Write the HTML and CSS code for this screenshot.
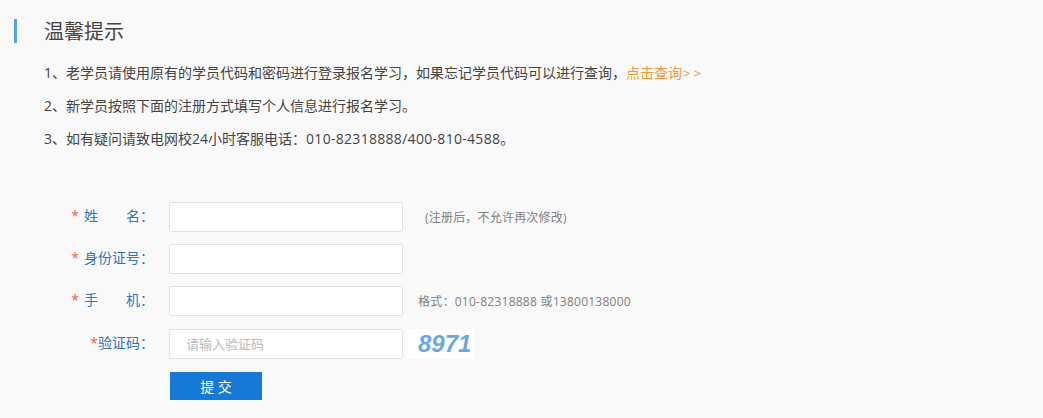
FILE: index.html
```html
<!DOCTYPE html>
<html lang="zh-CN">
<head>
    <meta charset="UTF-8">
    <title>温馨提示</title>
    <link rel="stylesheet" href="styles.css">
</head>
<body>
    <div class="tips">
        <h2 class="tips-title">温馨提示</h2>
        <ul class="tips-list">
            <li>1、老学员请使用原有的学员代码和密码进行登录报名学习，如果忘记学员代码可以进行查询，<a class="query-link" href="#">点击查询<span class="arrows">&gt;&gt;</span></a></li>
            <li>2、新学员按照下面的注册方式填写个人信息进行报名学习。</li>
            <li>3、如有疑问请致电网校24小时客服电话：<span class="tel">010-82318888/400-810-4588</span>。</li>
        </ul>
    </div>

    <form class="reg-form">
        <div class="form-row">
            <label class="form-label"><span class="star">*</span><span class="label-text spread">姓<i>名</i></span>：</label>
            <input class="form-input" type="text">
            <span class="form-hint hint-wide">(注册后，不允许再次修改)</span>
        </div>
        <div class="form-row">
            <label class="form-label"><span class="star">*</span><span class="label-text">身份证号</span>：</label>
            <input class="form-input" type="text">
        </div>
        <div class="form-row">
            <label class="form-label"><span class="star">*</span><span class="label-text spread">手<i>机</i></span>：</label>
            <input class="form-input" type="text">
            <span class="form-hint hint-format">格式：010-82318888 或13800138000</span>
        </div>
        <div class="form-row row-code">
            <label class="form-label"><span class="star tight">*</span>验证码：</label>
            <input class="form-input" type="text" placeholder="请输入验证码">
            <span class="captcha">8971</span>
        </div>
        <button class="submit-btn" type="button">提 交</button>
    </form>
</body>
</html>
```
FILE: styles.css
```css
* {
    box-sizing: border-box;
}
body {
    margin: 0;
    height: 418px;
    overflow: hidden;
    background-color: #f9f9f9;
    color: #444;
    font-family: "Open Sans", "Noto Sans CJK SC", sans-serif;
    font-size: 14px;
}
.tips {
    padding: 19px 0 0 14px;
}
.tips-title {
    margin: 0;
    padding-left: 27px;
    height: 24px;
    line-height: 26px;
    border-left: 3px solid #5ba3e6;
    font-size: 20px;
    font-weight: normal;
    color: #444;
}
.tips-list {
    margin: 14px 0 0;
    padding: 0 0 0 30px;
    list-style: none;
}
.tips-list li {
    height: 33px;
    line-height: 32px;
}
.tel {
    letter-spacing: 0.3px;
}
.query-link {
    color: #ee9a3a;
    text-decoration: none;
}
.arrows {
    letter-spacing: 3px;
    font-size: 13px;
    margin-left: 1px;
}
.reg-form {
    margin-top: 46px;
}
.form-row {
    display: flex;
    align-items: center;
    height: 30px;
    margin-bottom: 12px;
}
.row-code {
    margin-top: 13px;
    margin-bottom: 13px;
}
.form-label {
    display: flex;
    justify-content: flex-end;
    align-items: center;
    width: 154px;
    margin-right: 15px;
    margin-top: -2px;
    line-height: 20px;
    color: #2f75bb;
}
.star {
    margin-right: 5px;
    color: #f0623a;
}
.star.tight {
    margin-right: 0;
}
.label-text {
    width: 56px;
}
.spread {
    display: flex;
    justify-content: space-between;
}
.spread i {
    font-style: normal;
}
.form-input {
    width: 234px;
    height: 30px;
    padding: 0 16px;
    border: 1px solid #e2e2e2;
    border-radius: 2px;
    background-color: #fff;
    font-family: inherit;
    font-size: 13px;
}
.form-input::placeholder {
    color: #bbb;
}
.form-hint {
    margin-left: 15px;
    color: #808080;
    font-size: 12px;
}
.hint-wide {
    margin-left: 22px;
    letter-spacing: 0.2px;
}
.hint-format {
    letter-spacing: 0.25px;
}
.captcha {
    width: 67px;
    height: 30px;
    margin-left: 4px;
    padding-left: 11px;
    background-color: #fff;
    color: #6aa8e0;
    font-family: "Liberation Sans", sans-serif;
    font-size: 24px;
    font-weight: bold;
    font-style: italic;
    line-height: 30px;
    white-space: nowrap;
}
.submit-btn {
    display: block;
    width: 92px;
    height: 28px;
    margin-left: 170px;
    padding: 0;
    border: none;
    background-color: #1779d6;
    color: #fff;
    font-family: inherit;
    font-size: 14px;
}
```
